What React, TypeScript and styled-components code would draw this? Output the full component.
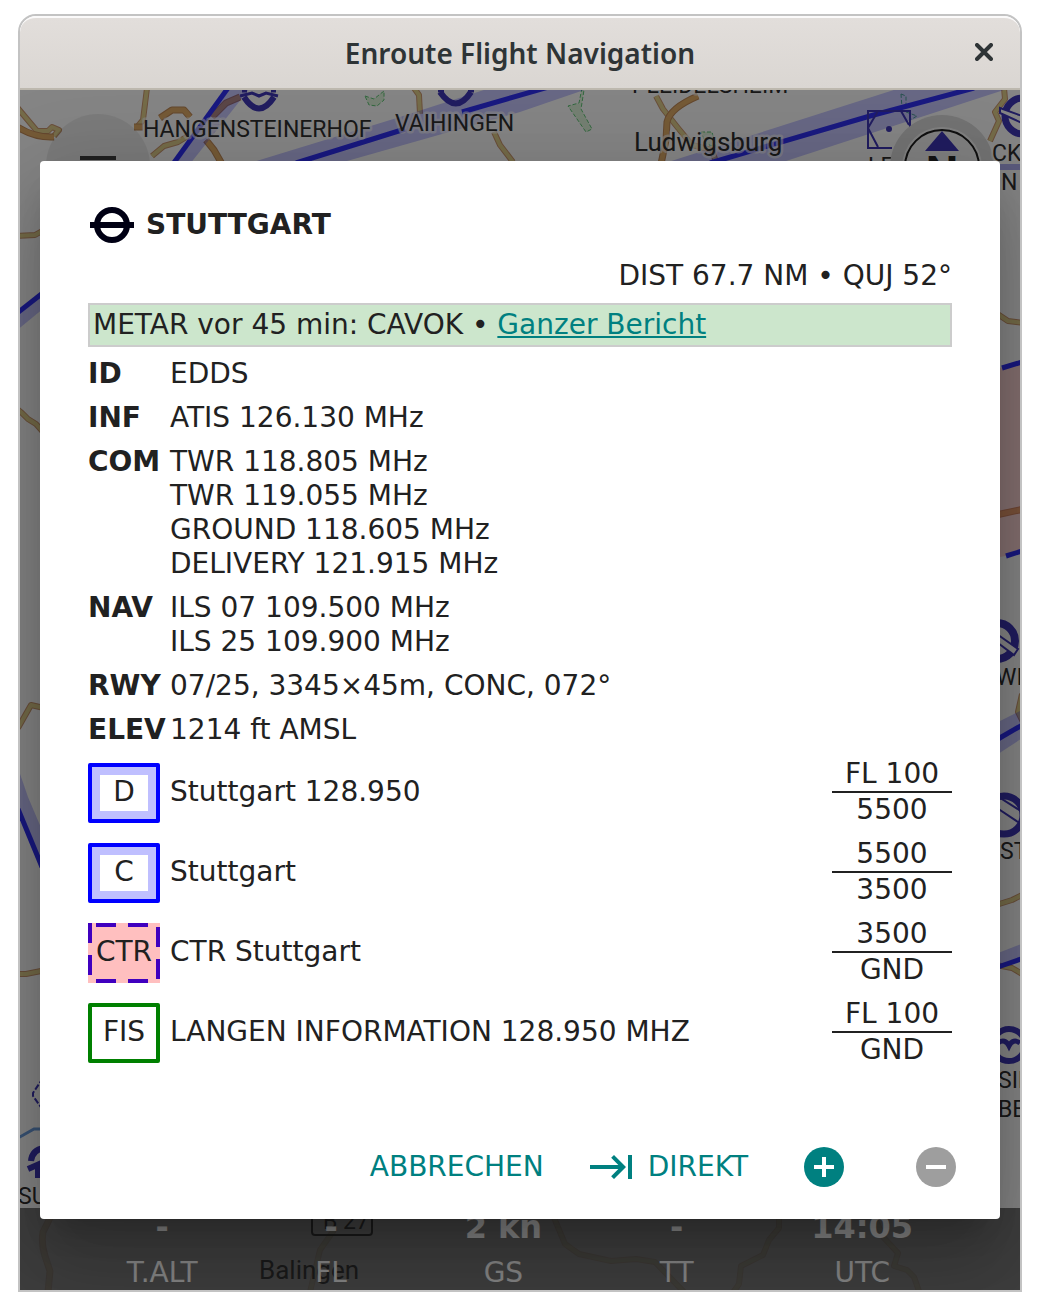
import React from "react";
import styled, { createGlobalStyle, css } from "styled-components";

const GlobalStyle = createGlobalStyle`
  *, *::before, *::after { box-sizing: border-box; }
  body {
    margin: 0;
    background: #fff;
    color: #212121;
    font: 28px/34px "DejaVu Sans", Verdana, sans-serif;
  }
`;

const Window = styled.main`
  margin: 14px 18px 18px;
  border: 2px solid #c3c3c3;
  border-radius: 18px 18px 0 0;
  overflow: hidden;
`;

const TitleBar = styled.header`
  display: grid;
  grid-template-columns: 72px 1fr 72px;
  align-items: center;
  height: 74px;
  background: linear-gradient(#e2dedb, #dad6d2);
  border-top: 2px solid #fbfafa;
  border-bottom: 2px solid #bdb8ae;
  border-radius: 16px 16px 0 0;
`;

const WindowTitle = styled.h1`
  grid-column: 2;
  margin: 0;
  text-align: center;
  color: #2e3436;
  font: 600 28px/36px "Noto Sans", "Open Sans", sans-serif;
`;

const CloseButton = styled.button`
  display: grid;
  place-items: center;
  height: 68px;
  padding: 0 0 2px;
  border: 0;
  background: none;
  color: #2e3436;
`;

const Stage = styled.div`
  position: relative;
  display: grid;
  grid-template-columns: minmax(0, 1fr);
  overflow: hidden;
  background: #fff;
  > * { grid-area: 1 / 1; }
`;

const MapCanvas = styled.svg`
  position: absolute;
  inset: 0;
  width: 100%;
  height: 100%;
  font-family: Roboto, "Noto Sans", sans-serif;
`;

const StatusBar = styled.footer`
  position: relative;
  align-self: end;
  display: flex;
  justify-content: space-around;
  height: 82px;
  padding: 0 48px;
  background: rgba(0, 0, 0, 0.53);
  color: #fff;
  text-align: center;
`;

const Reading = styled.div`
  display: flex;
  flex-direction: column;
  gap: 10px;
`;

const ReadingValue = styled.strong`
  font-size: 32px;
  line-height: 38px;
`;

const Scrim = styled.div`
  position: absolute;
  inset: 0;
  background: rgba(0, 0, 0, 0.48);
`;

const Dialog = styled.section`
  position: relative;
  display: flex;
  flex-direction: column;
  margin: 71px 20px;
  background: #fff;
  border-radius: 4px;
  box-shadow:
    0 22px 30px -14px rgba(0, 0, 0, 0.2),
    0 48px 76px 6px rgba(0, 0, 0, 0.14),
    0 18px 92px 16px rgba(0, 0, 0, 0.12);
`;

const DialogBody = styled.div`
  display: flex;
  flex-direction: column;
  gap: 10px;
  padding: 40px 48px 48px;
`;

const Heading = styled.div`
  display: flex;
  align-items: center;
  gap: 10px;
  height: 48px;
`;

const Name = styled.h2`
  margin: 0;
  font-size: 28px;
  line-height: 36px;
`;

const Distance = styled.p`
  margin: 0;
  text-align: right;
`;

const Metar = styled.p`
  margin: 0;
  padding: 3px;
  border: 2px solid #ccc;
  background: #cce6cc;
`;

const ReportLink = styled.a`
  color: #008080;
  text-decoration: underline;
`;

const Facts = styled.dl`
  display: grid;
  grid-template-columns: 82px 1fr;
  row-gap: 10px;
  margin: 0;
`;

const FactName = styled.dt`
  font-weight: bold;
`;

const FactValue = styled.dd`
  margin: 0;
  white-space: pre-line;
`;

const Airspaces = styled.ul`
  display: flex;
  flex-direction: column;
  gap: 10px;
  margin: 0;
  padding: 0;
  list-style: none;
`;

const Airspace = styled.li`
  display: grid;
  grid-template-columns: 72px 1fr 120px;
  align-items: center;
  column-gap: 10px;
`;

type Kind = "class" | "control" | "info";

const Badge = styled.span<{ $kind: Kind }>`
  display: grid;
  place-items: center;
  height: 60px;
  margin-top: 2px;
  padding-bottom: 2px;
  > * { grid-area: 1 / 1; }
  ${({ $kind }) =>
    $kind === "class" &&
    css`
      border: 4px solid #0000ff;
      border-radius: 2px;
      box-shadow: inset 0 0 0 8px #bfbfff;
    `}
  ${({ $kind }) => $kind === "control" && css`background: #ffbfbf;`}
  ${({ $kind }) =>
    $kind === "info" &&
    css`
      border: 4px solid #008000;
      border-radius: 2px;
    `}
`;

const BadgeFrame = styled.svg`
  align-self: start;
  margin-bottom: -2px;
`;

const Limits = styled.span`
  text-align: center;
`;

const Limit = styled.span`
  display: block;
  & + & { border-top: 2px solid #212121; }
`;

const Actions = styled.div`
  display: flex;
  justify-content: flex-end;
  align-items: center;
  gap: 16px;
  height: 104px;
  padding: 0 16px;
`;

const Action = styled.button`
  display: flex;
  align-items: center;
  justify-content: center;
  gap: 12px;
  height: 72px;
  padding: 0 12px 0 16px;
  border: 0;
  background: none;
  color: #008080;
  font: inherit;
`;

const IconAction = styled(Action)`
  width: 96px;
  padding: 0;
  &:disabled { color: #9e9e9e; }
`;

const facts: [string, string][] = [
  ["ID", "EDDS"],
  ["INF", "ATIS 126.130 MHz"],
  ["COM", "TWR 118.805 MHz\nTWR 119.055 MHz\nGROUND 118.605 MHz\nDELIVERY 121.915 MHz"],
  ["NAV", "ILS 07 109.500 MHz\nILS 25 109.900 MHz"],
  ["RWY", "07/25, 3345×45m, CONC, 072°"],
  ["ELEV", "1214 ft AMSL"],
];

const airspaces: { code: string; kind: Kind; name: string; top: string; bottom: string }[] = [
  { code: "D", kind: "class", name: "Stuttgart 128.950", top: "FL 100", bottom: "5500" },
  { code: "C", kind: "class", name: "Stuttgart", top: "5500", bottom: "3500" },
  { code: "CTR", kind: "control", name: "CTR Stuttgart", top: "3500", bottom: "GND" },
  { code: "FIS", kind: "info", name: "LANGEN INFORMATION 128.950 MHZ", top: "FL 100", bottom: "GND" },
];

const readings = [
  ["-", "T.ALT"],
  ["-", "FL"],
  ["2 kn", "GS"],
  ["-", "TT"],
  ["14:05", "UTC"],
];

function Road({ d, major }: { d: string; major?: boolean }) {
  return (
    <g fill="none" strokeLinejoin="round">
      <path d={d} stroke={major ? "#c08a58" : "#cc9870"} strokeWidth={major ? 7 : 6} />
      <path d={d} stroke={major ? "#e0ac68" : "#e0d08c"} strokeWidth={major ? 5 : 4} />
    </g>
  );
}

function Border({ d, band }: { d: string; band: string }) {
  return (
    <g>
      <path d={band} fill="#0000ff" fillOpacity="0.22" />
      <path d={d} fill="none" stroke="#3030f8" strokeWidth="5" />
    </g>
  );
}

function MapLabel({ x, y, size = 23, children }: { x: number; y: number; size?: number; children: string }) {
  return (
    <text x={x} y={y} fontSize={size} fill="#303030" stroke="#fff" strokeWidth="5" strokeOpacity="0.6" strokeLinejoin="round" paintOrder="stroke">
      {children}
    </text>
  );
}

function AirfieldMap() {
  return (
    <MapCanvas viewBox="20 90 1000 1200" preserveAspectRatio="xMidYMid slice" aria-hidden="true">
      <Road d="M15 236L35 235L44 230M16 408L22 413L28 419L36 424L44 433M18 728L31 705L44 708M15 974H26L46 970" />
      <Road d="M16 106L37 131L48 131L52 127L59 130L54 136" />
      <Road major d="M16 126Q34 138 54 137" />
      <Road d="M147 88L143 120L138 126M152 156L164 146L178 142L188 136" />
      <Road major d="M134 127H143M160 118L172 110H184L190 117M206 140L214 150L222 164" />
      <Road major d="M212 117L226 103L240 97" />
      <Road d="M414 88L419 95L420 114M494 132L500 145L513 162" />
      <Road d="M656 96L663 109L678 128L692 145L712 150L716 162" />
      <Road major d="M698 96Q670 108 667 122L666 140L661 164" />
      <Road d="M1004 88L1005 99L995 112L999 121L990 141" />
      <Road d="M996 313L1008 321L1024 323M996 905L1012 900L1024 894M996 965L1012 968L1024 975M1022 694L1018 712L1024 724" />
      <Road major d="M996 515L1024 509" />
      <g opacity="0.28">
        <Road major d="M52 1214L43 1232Q41 1244 45 1256L50 1271L48 1292" />
        <Road d="M334 1230L320 1250L310 1292M550 1208L565 1244L579 1254L611 1261L636 1259L655 1262L684 1292M779 1208V1228L769 1240L763 1255L741 1266L739 1284L732 1294M870 1208L884 1238L898 1253L894 1266L907 1270L914 1277L920 1294" />
      </g>

      <g fill="#c8ecc0" fillOpacity="0.55" stroke="#60c878" strokeWidth="1" strokeDasharray="4 2">
        <path d="M365 96L374 99L384 91V100L377 106L369 105Z" />
        <path d="M582 88L579 103L568 106L586 132L592 129L581 109L584 90" />
        <path d="M701 132H712L716 147L706 144Z" />
        <path fill="none" d="M901 94L906 96V106L902 108ZM906 112L917 116L910 120" />
      </g>

      <Border d="M228 88L173 164" band="M228 88H250L190 164H173Z" />
      <Border d="M296 163L405 129M462 112L552 86" band="M250 163L400 117L490 88H590L520 112L340 163Z" />
      <Border d="M710 163L870 116L974 88" band="M665 163L900 88H1010L780 163Z" />
      <Border d="M16 314L44 292" band="M16 314L44 292V308L16 331Z" />
      <Border d="M18 809L42 867" band="M18 768L28 797L42 830V867L18 809Z" />
      <path d="M1000 368L1020 362V553L1000 557Z" fill="#ff8080" fillOpacity="0.32" />
      <path d="M1002 368L1022 362M1006 556L1022 551" fill="none" stroke="#3030f8" strokeWidth="5" />
      <Border d="M998 739L1024 724" band="M998 722L1024 709V737L998 754Z" />
      <Border d="M998 967L1024 958" band="M998 953L1024 943V958L998 967Z" />
      <path d="M990 164H1024V170H990Z" fill="#aeaef0" />

      <g fill="none" stroke="#4038b8" strokeWidth="6">
        <path d="M244 97Q259 120 274 97M440 92Q456 115 471 92" />
        <path d="M240 96L252 93L259 96L266 93L278 96M242 91H247M271 91H276M438 91H444M468 91H474" strokeWidth="3" />
        <circle cx="1023" cy="116" r="18" strokeWidth="7" />
        <path d="M1000 108L1022 116V123L1000 113Z" fill="#fff" strokeWidth="2" />
        <circle cx="997" cy="641" r="18" strokeWidth="8" />
        <path d="M994 632L1018 649L1014 655L994 640" fill="#fff" strokeWidth="2" />
        <circle cx="1004" cy="815" r="19" strokeWidth="7" />
        <path d="M994 794L1024 813M994 806L1024 826" strokeWidth="2" />
        <circle cx="1009" cy="1045" r="16" />
        <path d="M998 1043Q1005 1038 1009 1046Q1013 1038 1020 1043" strokeWidth="5" />
        <path d="M31 1161Q32 1150 44 1148M28 1169L44 1162M38 1178V1166" strokeWidth="6" />
        <path d="M43 1078L33 1093V1096L43 1110" strokeWidth="2" strokeDasharray="6 2" />
        <path d="M910 128V111H868V148H892M868 128L878 111M868 128L878 147M901 111L909 125" strokeWidth="2" />
      </g>
      <circle cx="889" cy="129" r="3" fill="#4038b8" />
      <path d="M18 1138L34 1129H44" fill="none" stroke="#6d9fe0" strokeWidth="3" />

      <MapLabel x={143} y={137}>HANGENSTEINERHOF</MapLabel>
      <MapLabel x={395} y={131}>VAIHINGEN</MapLabel>
      <MapLabel x={632} y={93}>PLEIDELSHEIM</MapLabel>
      <MapLabel x={634} y={151} size={26}>Ludwigsburg</MapLabel>
      <MapLabel x={868} y={174}>LE</MapLabel>
      <MapLabel x={1001} y={190}>N</MapLabel>
      <MapLabel x={996} y={685}>WI</MapLabel>
      <MapLabel x={1000} y={859}>ST</MapLabel>
      <MapLabel x={998} y={1088}>SIN</MapLabel>
      <MapLabel x={998} y={1117}>BE</MapLabel>
      <MapLabel x={18} y={1204}>SU</MapLabel>
      <g opacity="0.7">
        <text x="259" y="1279" fontSize="26" fill="#303030">Balingen</text>
        <rect x="312" y="1200" width="60" height="35" rx="3" fill="none" stroke="#303030" strokeWidth="2" />
        <text x="323" y="1229" fontSize="23" fill="#303030">B 27</text>
      </g>

      <circle cx="98" cy="166" r="52" fill="#000" fillOpacity="0.08" />
      <path d="M80 158H116" stroke="#404040" strokeWidth="4" />
      <circle cx="942" cy="167" r="52" fill="#dcdcdc" />
      <circle cx="942" cy="167" r="40" fill="#f8f8f8" />
      <circle cx="942" cy="167" r="37" fill="none" stroke="#202020" strokeWidth="2" />
      <path d="M942 131L959 151H925Z" fill="#4038b8" />
      <text x="942" y="189" textAnchor="middle" fontSize="46" fontWeight="bold" fill="#282828">N</text>
      <MapLabel x={992} y={161}>CK</MapLabel>
    </MapCanvas>
  );
}

function DashedFrame() {
  return (
    <BadgeFrame width="72" height="60" fill="none" stroke="#4000bf" strokeWidth="4" aria-hidden="true">
      <path d="M8 2H72M8 58H72M2 0V60M70 4V60" strokeDasharray="20 12" />
    </BadgeFrame>
  );
}

export default function App() {
  return (
    <>
      <GlobalStyle />
      <Window>
        <TitleBar>
          <WindowTitle>Enroute Flight Navigation</WindowTitle>
          <CloseButton type="button" aria-label="Close">
            <svg width="18" height="18" viewBox="0 0 18 18" fill="none" stroke="currentColor" strokeWidth="4">
              <path d="M2 2L16 16M16 2L2 16" strokeLinecap="round" />
            </svg>
          </CloseButton>
        </TitleBar>
        <Stage>
          <AirfieldMap />
          <StatusBar>
            {readings.map(([value, label]) => (
              <Reading key={label}>
                <ReadingValue>{value}</ReadingValue>
                <span>{label}</span>
              </Reading>
            ))}
          </StatusBar>
          <Scrim />
          <Dialog role="dialog" aria-labelledby="waypoint-name">
            <DialogBody>
              <Heading>
                <svg width="48" height="48" viewBox="0 0 48 48" fill="none" stroke="#000014" strokeWidth="6" aria-hidden="true">
                  <circle cx="24" cy="24" r="15" />
                  <path d="M2 24H46" />
                </svg>
                <Name id="waypoint-name">STUTTGART</Name>
              </Heading>
              <Distance>DIST 67.7 NM • QUJ 52°</Distance>
              <Metar>
                METAR vor 45 min: CAVOK • <ReportLink href="#bericht">Ganzer Bericht</ReportLink>
              </Metar>
              <Facts>
                {facts.map(([name, value]) => (
                  <React.Fragment key={name}>
                    <FactName>{name}</FactName>
                    <FactValue>{value}</FactValue>
                  </React.Fragment>
                ))}
              </Facts>
              <Airspaces>
                {airspaces.map((a) => (
                  <Airspace key={a.code}>
                    <Badge $kind={a.kind}>
                      {a.kind === "control" && <DashedFrame />}
                      <span>{a.code}</span>
                    </Badge>
                    <span>{a.name}</span>
                    <Limits>
                      <Limit>{a.top}</Limit>
                      <Limit>{a.bottom}</Limit>
                    </Limits>
                  </Airspace>
                ))}
              </Airspaces>
            </DialogBody>
            <Actions>
              <Action type="button">ABBRECHEN</Action>
              <Action type="button">
                <svg width="48" height="48" viewBox="0 0 24 24" fill="currentColor" aria-hidden="true">
                  <path d="M11.59 7.41L15.17 11H1v2h14.17l-3.59 3.59L13 18l6-6-6-6-1.41 1.41zM20 6v12h2V6h-2z" />
                </svg>
                DIREKT
              </Action>
              <IconAction type="button" aria-label="Hinzufügen">
                <svg width="40" height="40" viewBox="0 0 40 40" aria-hidden="true">
                  <circle cx="20" cy="20" r="20" fill="currentColor" />
                  <path d="M10 20H30M20 10V30" stroke="#fff" strokeWidth="4" />
                </svg>
              </IconAction>
              <IconAction type="button" aria-label="Entfernen" disabled>
                <svg width="40" height="40" viewBox="0 0 40 40" aria-hidden="true">
                  <circle cx="20" cy="20" r="20" fill="currentColor" />
                  <path d="M10 20H30" stroke="#fff" strokeWidth="4" />
                </svg>
              </IconAction>
            </Actions>
          </Dialog>
        </Stage>
      </Window>
    </>
  );
}
